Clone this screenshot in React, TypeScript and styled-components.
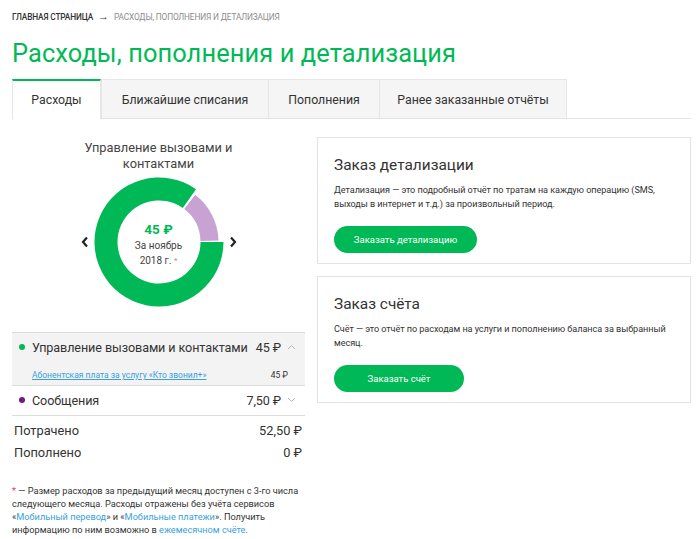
import React from "react";
import styled, { createGlobalStyle } from "styled-components";

const GREEN = "#00b956";
const PURPLE = "#731982";
const LINK = "#3a9fdc";

const Global = createGlobalStyle`
  html, body { margin: 0; padding: 0; background: #fff; }
  body { font-family: Roboto, "Noto Sans", Arial, sans-serif; color: #333; }
  * { box-sizing: border-box; }
`;

const Page = styled.div`
  width: 700px;
  padding: 11px 9px 0 12px;
`;

const Breadcrumb = styled.div`
  display: flex;
  align-items: center;
  gap: 5px;
  font-size: 8.3px;
  line-height: 12px;
  text-transform: uppercase;
  letter-spacing: -0.15px;
`;

const Crumb = styled.span<{ $muted?: boolean }>`
  color: ${(p) => (p.$muted ? "#8c8c8c" : "#333")};
  font-weight: ${(p) => (p.$muted ? 400 : 500)};
`;

const CrumbArrow = styled.span`
  font-size: 11px;
  color: #333;
  font-weight: 700;
  line-height: 12px;
`;

const Title = styled.h1`
  margin: 14px 0 0;
  font-size: 25.4px;
  line-height: 32px;
  font-weight: 400;
  color: ${GREEN};
  letter-spacing: 0.1px;
`;

const Tabs = styled.div`
  display: flex;
  margin-top: 10px;
  border-bottom: 1px solid #e3e3e3;
  height: 40px;
`;

const Tab = styled.div<{ $active?: boolean; $w: number }>`
  width: ${(p) => p.$w}px;
  display: flex;
  align-items: center;
  justify-content: center;
  font-size: 12.3px;
  color: #333;
  background: ${(p) => (p.$active ? "#fff" : "#f5f5f5")};
  border-top: ${(p) => (p.$active ? `2px solid ${GREEN}` : "1px solid #e6e6e6")};
  border-left: 1px solid #e6e6e6;
  border-right: ${(p) => (p.$active ? "1px solid #e6e6e6" : "0")};
  margin-bottom: ${(p) => (p.$active ? "-1px" : "0")};
  height: ${(p) => (p.$active ? "40px" : "39px")};
  padding-top: ${(p) => (p.$active ? "0" : "1px")};
  &:last-child { border-right: 1px solid #e6e6e6; }
`;

const Content = styled.div`
  display: grid;
  grid-template-columns: 293px 374px;
  column-gap: 12px;
  margin-top: 18px;
  align-items: start;
`;

const Left = styled.div`
  display: flex;
  flex-direction: column;
`;

const ChartTitle = styled.div`
  align-self: center;
  width: 170px;
  text-align: center;
  font-size: 12.8px;
  line-height: 16px;
  color: #444;
  margin-top: 3px;
`;

const ChartRow = styled.div`
  display: flex;
  align-items: center;
  justify-content: center;
  gap: 4px;
  margin-top: 5px;
`;

const Arrow = styled.button`
  border: 0;
  background: none;
  padding: 0;
  width: 10px;
  height: 14px;
  display: flex;
  align-items: center;
  justify-content: center;
  cursor: pointer;
`;

const Donut = styled.div`
  position: relative;
  width: 130px;
  height: 130px;
`;

const DonutCenter = styled.div`
  position: absolute;
  inset: 0;
  display: flex;
  flex-direction: column;
  align-items: center;
  justify-content: center;
  padding-top: 4px;
`;

const Amount = styled.div`
  font-size: 13.5px;
  font-weight: 700;
  color: ${GREEN};
  line-height: 17px;
`;

const Period = styled.div`
  font-size: 10px;
  line-height: 15px;
  color: #444;
  text-align: center;
`;

const Mark = styled.span`
  color: #999;
  font-size: 8px;
  vertical-align: top;
`;

const List = styled.div`
  margin-top: 25px;
  border-top: 1px solid #dcdcdc;
`;

const Item = styled.div<{ $open?: boolean }>`
  background: ${(p) => (p.$open ? "#f3f3f3" : "#fff")};
  border-bottom: 1px solid #dcdcdc;
  padding: ${(p) => (p.$open ? "5px 0 4px" : "5px 0 6px")};
`;

const ItemRow = styled.div`
  display: flex;
  align-items: center;
  height: 18px;
  font-size: 12.6px;
  letter-spacing: -0.1px;
  white-space: nowrap;
  color: #333;
  padding-left: 7px;
  padding-right: 9px;
`;

const Dot = styled.span<{ $c: string }>`
  width: 6px;
  height: 6px;
  border-radius: 50%;
  background: ${(p) => p.$c};
  margin-right: 7px;
  flex: none;
`;

const ItemName = styled.span`
  flex: 1;
`;

const ItemSum = styled.span`
  margin-right: 6px;
`;

const SubRow = styled.div`
  display: flex;
  align-items: center;
  justify-content: space-between;
  padding: 0 17px 0 20px;
  margin-top: 13px;
  font-size: 8.5px;
  line-height: 12px;
`;

const SubLink = styled.a`
  color: ${LINK};
  text-decoration: underline;
`;

const Total = styled.div`
  display: flex;
  justify-content: space-between;
  font-size: 12.8px;
  line-height: 22px;
  padding: 0 3px 0 2px;
  color: #333;
`;

const Totals = styled.div`
  margin-top: 4px;
`;

const Note = styled.p`
  margin: 20px 0 0;
  font-size: 9.2px;
  line-height: 13px;
  color: #333;
`;

const Star = styled.span`
  color: #e8412d;
`;

const NoteLink = styled.a`
  color: ${LINK};
  text-decoration: none;
`;

const Right = styled.div`
  display: flex;
  flex-direction: column;
  gap: 12px;
`;

const Card = styled.div`
  border: 1px solid #e3e3e3;
  padding: 15px 16px 10px 16px;
`;

const CardTitle = styled.div`
  font-size: 15.4px;
  line-height: 24px;
  color: #333;
`;

const CardText = styled.div`
  margin-top: 6px;
  font-size: 9.1px;
  line-height: 14px;
  letter-spacing: -0.05px;
  color: #333;
`;

const Button = styled.button<{ $w: number }>`
  margin-top: 15px;
  width: ${(p) => p.$w}px;
  height: 27px;
  border: 0;
  border-radius: 14px;
  background: ${GREEN};
  color: #fff;
  font-family: inherit;
  font-size: 9.5px;
  cursor: pointer;
  display: block;
`;

function polar(cx: number, cy: number, r: number, deg: number) {
  const a = ((deg - 90) * Math.PI) / 180;
  return [cx + r * Math.cos(a), cy + r * Math.sin(a)];
}

function arc(cx: number, cy: number, ro: number, ri: number, a0: number, a1: number) {
  const [x0, y0] = polar(cx, cy, ro, a0);
  const [x1, y1] = polar(cx, cy, ro, a1);
  const [x2, y2] = polar(cx, cy, ri, a1);
  const [x3, y3] = polar(cx, cy, ri, a0);
  const large = a1 - a0 > 180 ? 1 : 0;
  return `M${x0} ${y0} A${ro} ${ro} 0 ${large} 1 ${x1} ${y1} L${x2} ${y2} A${ri} ${ri} 0 ${large} 0 ${x3} ${y3} Z`;
}

const Chevron = ({ dir }: { dir: "left" | "right" }) => (
  <svg width="8" height="12" viewBox="0 0 8 12">
    <path
      d={dir === "left" ? "M6 1.5 L2 6 L6 10.5" : "M2 1.5 L6 6 L2 10.5"}
      fill="none"
      stroke="#222"
      strokeWidth="2.2"
    />
  </svg>
);

const Caret = ({ up }: { up?: boolean }) => (
  <svg width="9" height="6" viewBox="0 0 9 6">
    <path d={up ? "M1 5 L4.5 1.5 L8 5" : "M1 1 L4.5 4.5 L8 1"} fill="none" stroke="#b5b5b5" strokeWidth="1" />
  </svg>
);

export default function App() {
  return (
    <Page>
      <Global />
      <Breadcrumb>
        <Crumb>Главная страница</Crumb>
        <CrumbArrow>→</CrumbArrow>
        <Crumb $muted>Расходы, пополнения и детализация</Crumb>
      </Breadcrumb>
      <Title>Расходы, пополнения и детализация</Title>
      <Tabs>
        <Tab $active $w={89}>Расходы</Tab>
        <Tab $w={167}>Ближайшие списания</Tab>
        <Tab $w={111}>Пополнения</Tab>
        <Tab $w={188}>Ранее заказанные отчёты</Tab>
      </Tabs>
      <Content>
        <Left>
          <ChartTitle>Управление вызовами и контактами</ChartTitle>
          <ChartRow>
            <Arrow aria-label="prev"><Chevron dir="left" /></Arrow>
            <Donut>
              <svg width="130" height="130" viewBox="0 0 130 130">
                <path d={arc(65, 65, 64.5, 41.5, 90, 395)} fill={GREEN} />
                <path d={arc(65, 65, 59.5, 41.5, 37.5, 88.5)} fill="#c8a2d2" />
              </svg>
              <DonutCenter>
                <Amount>45 ₽</Amount>
                <Period>За ноябрь<br />2018 г. <Mark>*</Mark></Period>
              </DonutCenter>
            </Donut>
            <Arrow aria-label="next"><Chevron dir="right" /></Arrow>
          </ChartRow>
          <List>
            <Item $open>
              <ItemRow>
                <Dot $c={GREEN} />
                <ItemName>Управление вызовами и контактами</ItemName>
                <ItemSum>45 ₽</ItemSum>
                <Caret up />
              </ItemRow>
              <SubRow>
                <SubLink href="#">Абонентская плата за услугу «Кто звонил+»</SubLink>
                <span>45 ₽</span>
              </SubRow>
            </Item>
            <Item>
              <ItemRow>
                <Dot $c={PURPLE} />
                <ItemName>Сообщения</ItemName>
                <ItemSum>7,50 ₽</ItemSum>
                <Caret />
              </ItemRow>
            </Item>
          </List>
          <Totals>
            <Total><span>Потрачено</span><span>52,50 ₽</span></Total>
            <Total><span>Пополнено</span><span>0 ₽</span></Total>
          </Totals>
          <Note>
            <Star>*</Star> — Размер расходов за предыдущий месяц доступен с 3-го числа следующего месяца. Расходы отражены без учёта сервисов «<NoteLink href="#">Мобильный перевод</NoteLink>» и «<NoteLink href="#">Мобильные платежи</NoteLink>». Получить информацию по ним возможно в <NoteLink href="#">ежемесячном счёте</NoteLink>.
          </Note>
        </Left>
        <Right>
          <Card>
            <CardTitle>Заказ детализации</CardTitle>
            <CardText>Детализация — это подробный отчёт по тратам на каждую операцию (SMS, выходы в интернет и т.д.) за произвольный период.</CardText>
            <Button $w={143}>Заказать детализацию</Button>
          </Card>
          <Card>
            <CardTitle>Заказ счёта</CardTitle>
            <CardText>Счёт — это отчёт по расходам на услуги и пополнению баланса за выбранный месяц.</CardText>
            <Button $w={130}>Заказать счёт</Button>
          </Card>
        </Right>
      </Content>
    </Page>
  );
}
